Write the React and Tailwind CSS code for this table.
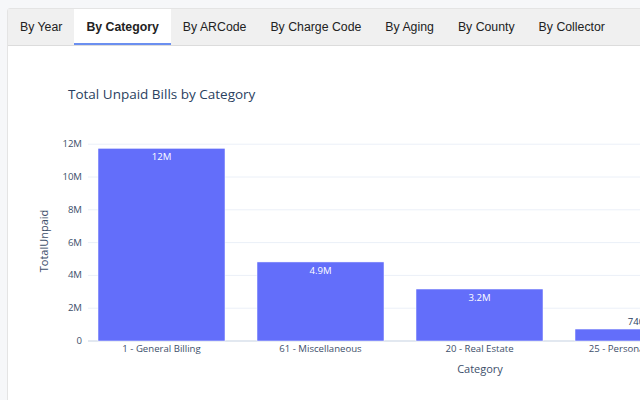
import React from "react";

const tabs = ["By Year", "By Category", "By ARCode", "By Charge Code", "By Aging", "By County", "By Collector"];

const bars = [
  { label: "1 - General Billing", value: 11.75, text: "12M" },
  { label: "61 - Miscellaneous", value: 4.82, text: "4.9M" },
  { label: "20 - Real Estate", value: 3.17, text: "3.2M" },
  { label: "25 - Personal Property", value: 0.73, text: "740k", outside: true },
];

function Chart() {
  const y0 = 340;
  const perM = 16.4;
  const ticks = [0, 2, 4, 6, 8, 10, 12];
  const font = "'Open Sans', verdana, arial, sans-serif";
  return (
    <svg width="640" height="355" className="block">
      <g transform="translate(-8,-45)" fontFamily={font}>
        <text x="68" y="98" fontSize="13.5" fill="#2a3f5f">
          Total Unpaid Bills by Category
        </text>
        {ticks.map((t) => (
          <g key={t}>
            <line x1="88" x2="700" y1={y0 - t * perM} y2={y0 - t * perM} stroke={t === 0 ? "#e2e8f0" : "#ebf0f8"} strokeWidth={t === 0 ? 2 : 1} />
            <text x="82" y={y0 - t * perM + 3} fontSize="9.6" textAnchor="end" fill="#3d4f6b">
              {t === 0 ? "0" : `${t}M`}
            </text>
          </g>
        ))}
        {bars.map((b, i) => {
          const x = 98 + i * 159;
          const top = y0 - b.value * perM;
          return (
            <g key={b.label}>
              <rect x={x} y={top} width="127" height={y0 - top} fill="#636efa" stroke="#ffffff" strokeWidth="0.5" />
              <text
                x={x + 63.5}
                y={b.outside ? top - 4 : top + 12}
                fontSize="9.6"
                textAnchor="middle"
                fill={b.outside ? "#2a3f5f" : "#ffffff"}
              >
                {b.text}
              </text>
              <text x={x + 63.5} y="351" fontSize="9.6" textAnchor="middle" fill="#3d4f6b">
                {b.label}
              </text>
            </g>
          );
        })}
        <text x="480" y="372" fontSize="11" textAnchor="middle" fill="#3d4f6b">
          Category
        </text>
        <text x="0" y="0" fontSize="11" textAnchor="middle" fill="#3d4f6b" transform="translate(48,240) rotate(-90)">
          TotalUnpaid
        </text>
      </g>
    </svg>
  );
}

export default function App() {
  return (
    <div className="w-[640px] h-[400px] overflow-hidden bg-[#f6f7f9] pt-[8px] pl-[7px]">
      <div className="w-[700px] h-[420px] bg-white border border-[#e4e4e4] rounded-tl-[3px]">
        <div className="flex h-[37px] bg-[#f0f0f0] border-b border-[#dcdcdc] font-['Liberation_Sans',Arial,sans-serif] text-[12.3px] text-[#222]">
          {tabs.map((t) => {
            const active = t === "By Category";
            return (
              <div
                key={t}
                className={`px-3 flex items-center ${
                  active ? "bg-white font-bold border-b-2 border-[#6b8ff0] pt-[2px]" : ""
                }`}
              >
                {t}
              </div>
            );
          })}
        </div>
        <Chart />
      </div>
    </div>
  );
}
